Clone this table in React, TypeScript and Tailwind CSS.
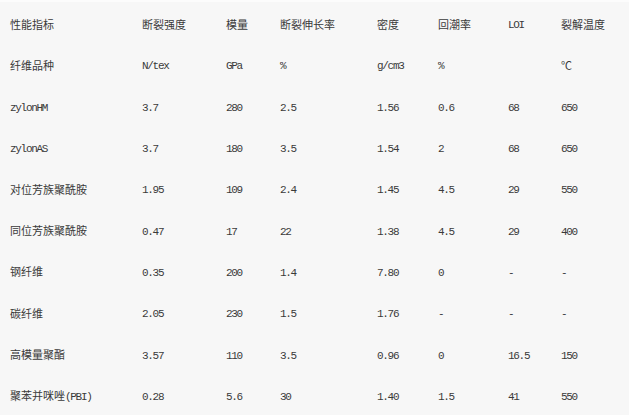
import React from 'react';

const header = ['性能指标', '断裂强度', '模量', '断裂伸长率', '密度', '回潮率', 'LOI', '裂解温度'];

const rows: string[][] = [
  ['纤维品种', 'N/tex', 'GPa', '%', 'g/cm3', '%', '', '℃'],
  ['zylonHM', '3.7', '280', '2.5', '1.56', '0.6', '68', '650'],
  ['zylonAS', '3.7', '180', '3.5', '1.54', '2', '68', '650'],
  ['对位芳族聚酰胺', '1.95', '109', '2.4', '1.45', '4.5', '29', '550'],
  ['同位芳族聚酰胺', '0.47', '17', '22', '1.38', '4.5', '29', '400'],
  ['钢纤维', '0.35', '200', '1.4', '7.80', '0', '-', '-'],
  ['碳纤维', '2.05', '230', '1.5', '1.76', '-', '-', '-'],
  ['高模量聚酯', '3.57', '110', '3.5', '0.96', '0', '16.5', '150'],
  ['聚苯并咪唑(PBI)', '0.28', '5.6', '30', '1.40', '1.5', '41', '550'],
];

const colW = ['w-[142px] pl-[10px]', 'w-[84px]', 'w-[54px]', 'w-[97px]', 'w-[61px]', 'w-[70px]', 'w-[53px]', 'flex-1'];

// split text into CJK runs and latin runs so latin gets the narrow mono look
function Cell({ text }: { text: string }) {
  const parts = text.match(/[\u3000-\u9fff℃]+|[^\u3000-\u9fff℃]+/g) || [];
  return (
    <>
      {parts.map((p, i) =>
        /[\u3000-\u9fff℃]/.test(p) ? (
          <span key={i} className="font-['Noto_Sans_CJK_SC',sans-serif] text-[11px]">{p}</span>
        ) : (
          <span key={i} className="font-['Liberation_Mono',monospace] text-[11px] tracking-[-1.3px]">{p}</span>
        )
      )}
    </>
  );
}

function Row({ cells }: { cells: string[] }) {
  return (
    <div className="flex h-[41.3px] items-center text-[#3a3a3a]">
      {cells.map((c, i) => (
        <div key={i} className={`${colW[i]} shrink-0 whitespace-nowrap leading-none`}>
          <Cell text={c} />
        </div>
      ))}
    </div>
  );
}

export default function App() {
  return (
    <div className="h-[415px] w-[640px] bg-white overflow-hidden">
      <div className="w-[629px] h-full bg-[#f7f7f7] border-t-2 border-[#fcfcfc]">
        <Row cells={header} />
        {rows.map((r, i) => (
          <Row key={i} cells={r} />
        ))}
      </div>
    </div>
  );
}
